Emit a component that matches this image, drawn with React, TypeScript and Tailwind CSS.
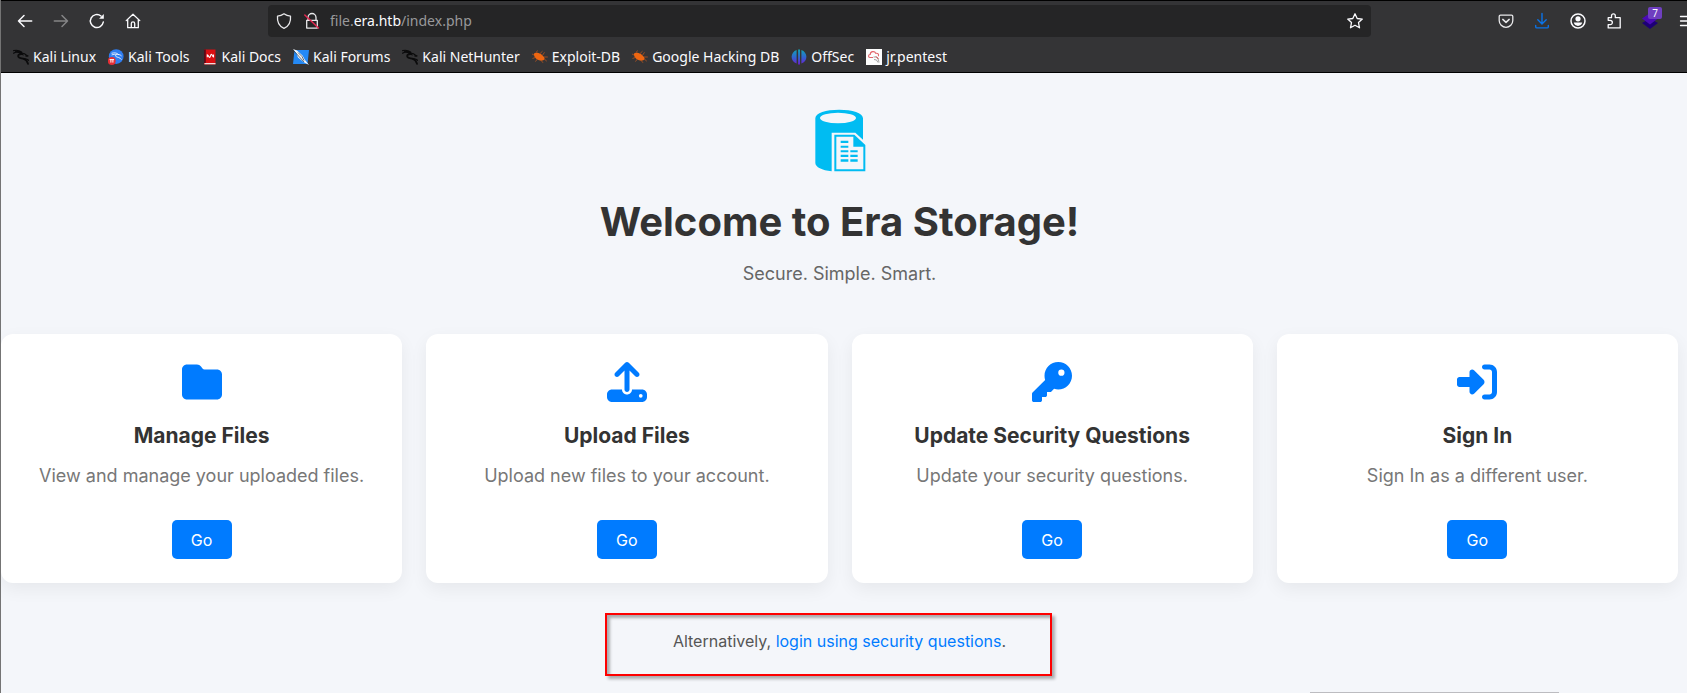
import type { ReactNode } from "react";
import { FaFolder, FaKey, FaRightToBracket, FaUpload } from "react-icons/fa6";

function NavButton({ label, children }: { label: string; children: ReactNode }) {
  return (
    <button aria-label={label} className="relative flex h-8 w-9 shrink-0 items-center justify-center text-[#fbfbfe]">
      {children}
    </button>
  );
}

function Line({ children, className = "" }: { children: ReactNode; className?: string }) {
  return (
    <svg
      viewBox="0 0 16 16"
      className={`size-4 shrink-0 overflow-visible ${className}`}
      fill="none"
      stroke="currentColor"
      strokeWidth="1.3"
      strokeLinecap="round"
      strokeLinejoin="round"
      aria-hidden="true"
    >
      {children}
    </svg>
  );
}

const kaliDragon = (
  <svg viewBox="0 0 16 16" className="size-4" fill="none" stroke="#0b0b0c" strokeLinecap="round" aria-hidden="true">
    <path d="M.6 1.6C3.500.9 6.500 1.500 8.600 3M.5 4.200C3 2.800 6 2.700 8.800 3.400" strokeWidth="1.200" />
    <path d="M3 2.400C6 3 8 4 9 5.200c-3-.4-4.300 1-3.600 2.600C6.200 9.600 9 9 11 9.800c2.200.9 3.300 2.600 4 5" strokeWidth="1.800" />
    <path d="M8.500 4.200c2.500.1 4 .7 5 2.100l1.800.9-2.300-.2M11 10c2-.3 3.400.2 4.500 1.300" strokeWidth="1.300" />
  </svg>
);

const kaliTools = (
  <svg viewBox="0 0 16 16" className="size-4" aria-hidden="true">
    <circle cx="8.200" cy="7.600" r="7.400" fill="#2f7df0" />
    <path d="M3.500 4.300c3-.9 5.500-.4 7 1.200-2.500-.2-3.600.7-2.700 1.900 1 1.100 3.800.4 5.700 3.300M3.600 6c2-.8 3.500-.8 5-.3M10 5.500c1.600 0 2.600.5 3.600 1.500" fill="none" stroke="#fff" strokeWidth=".8" />
    <circle cx="3.800" cy="12" r="3.900" fill="#e62e35" />
    <path d="M1.600 10.600h4.500M2.900 10.600v3M4.900 10.600v3" fill="none" stroke="#fff" strokeWidth="1" />
  </svg>
);

const kaliDocs = (
  <svg viewBox="0 0 16 16" className="size-4" aria-hidden="true">
    <path d="M2 .5h11.500v15H2z" fill="#d90f12" />
    <path d="M2 .5h1.800v13.500H2z" fill="#5b0b18" />
    <path d="M2.500 14h11v1.300h-11z" fill="#efdcdc" />
    <path d="M5.300 8.300V5.800c1 0 1.300 2.600 2.300 2.600s.8-3 1.800-3 1 2.600 2.100 2.600V5.600" fill="none" stroke="#fff" strokeWidth="1.100" />
  </svg>
);

const kaliForums = (
  <svg viewBox="0 0 16 16" className="size-4" aria-hidden="true">
    <path d="M1.500 1H16l-1.500 14H0z" fill="#2489f5" />
    <path d="M0 0l4 1.500 5.500 5L12 11l4 5-5.500-3L5 8.500 3.500 4.500z" fill="#f4f7fb" />
    <path d="M1 2l5 5.500L11 13M5 3.500l4 4 2 4" fill="none" stroke="#27313d" strokeWidth=".7" />
  </svg>
);

const exploitBug = (
  <svg viewBox="0 0 16 16" className="size-4" aria-hidden="true">
    <path d="M2 4.500C4 3.300 7 3.800 9.500 5.600c2 1.400 3.500 3.400 3 4.700-.8 1.700-4.800 1.800-7.300.3C3 9.200 1.500 6.500 2 4.500z" fill="#ee6611" />
    <path d="M4 3.800L5.500 1.500M8 4.600l2.500-2.400M10.500 6.300l2-3M12 8h3.800M12.300 10l2.500 2.200M9 11.300l2 2.500M5 10.300l-1.500 2.300M3.200 8.500L.5 9.500M2 6L0 5" fill="none" stroke="#b65420" strokeWidth=".8" />
  </svg>
);

const offSec = (
  <svg viewBox="0 0 16 16" className="size-4" aria-hidden="true">
    <defs>
      <linearGradient id="offsec" x1="0" y1="0" x2="0" y2="1">
        <stop offset="0" stopColor="#10a5b5" />
        <stop offset=".5" stopColor="#2f67cf" />
        <stop offset="1" stopColor="#6a1fd0" />
      </linearGradient>
    </defs>
    <path d="M5.600.9v13.700C2.600 13.500.6 10.900.6 7.800S2.600 2 5.600.9zM10.400.9c3 1.100 5 3.800 5 6.900s-2 5.700-5 6.800zM7.100.5h1.900v15H7.100z" fill="url(#offsec)" />
  </svg>
);

const pentestCloud = (
  <svg viewBox="0 0 16 16" className="size-4" aria-hidden="true">
    <path d="M0 0h16v16H0z" fill="#fdfdfd" />
    <path d="M7 8.500H4C2 8.300 2 5.600 4.200 5.500 4.300 2 8.800 1.800 9.700 4.300c2.200-.4 3.500 1.200 2.600 3" fill="none" stroke="#e2666c" strokeWidth="1.100" />
    <path d="M7.500 8h3.500l1.500 3 .5 2.500M8 10.500l2.500.5L12 13.500" fill="none" stroke="#999" strokeWidth=".9" />
    <path d="M10 7.500l2.500 2.500" stroke="#d33" strokeWidth=".9" />
  </svg>
);

const bookmarks = [
  { label: "Kali Linux", icon: kaliDragon },
  { label: "Kali Tools", icon: kaliTools },
  { label: "Kali Docs", icon: kaliDocs },
  { label: "Kali Forums", icon: kaliForums },
  { label: "Kali NetHunter", icon: kaliDragon },
  { label: "Exploit-DB", icon: exploitBug },
  { label: "Google Hacking DB", icon: exploitBug },
  { label: "OffSec", icon: offSec },
  { label: "jr.pentest", icon: pentestCloud },
];

const cards = [
  { title: "Manage Files", text: "View and manage your uploaded files.", Icon: FaFolder },
  { title: "Upload Files", text: "Upload new files to your account.", Icon: FaUpload },
  { title: "Update Security Questions", text: "Update your security questions.", Icon: FaKey },
  { title: "Sign In", text: "Sign In as a different user.", Icon: FaRightToBracket },
];

function BrowserChrome() {
  return (
    <header className="overflow-hidden border-y border-black bg-[#343436] font-['Noto_Sans',sans-serif] text-[#fbfbfe]">
      <div className="-mr-[17px] flex items-center py-1 pl-1.5">
        <NavButton label="Back">
          <Line><path d="M14.700 8H1.500M7 2.500L1.500 8 7 13.500" strokeWidth="1.500" /></Line>
        </NavButton>
        <NavButton label="Forward">
          <Line className="text-[#858587]"><path d="M1.300 8h13.200M9 2.500L14.500 8 9 13.500" strokeWidth="1.500" /></Line>
        </NavButton>
        <NavButton label="Reload">
          <Line>
            <path d="M14.300 9A6.500 6.500 0 1 1 12 3" strokeWidth="1.500" />
            <path d="M14.800 1v4.700h-4.700z" fill="currentColor" stroke="none" />
          </Line>
        </NavButton>
        <NavButton label="Home">
          <Line><path d="M1.200 7.600L8 1.200l6.800 6.400M2.700 6.500v8.200h10.600V6.500M6.300 14.500v-4a1.700 1.700 0 0 1 3.400 0v4" /></Line>
        </NavButton>
        <div className="mx-[117px] flex h-8 min-w-0 flex-1 items-center rounded bg-[#252526] px-2">
          <Line className="text-[#e8e8ea]">
            <path d="M8 .8C6.200 2.200 4 3 1.500 3.100c-.5 5.400 1.300 10 6.500 12.200 5.200-2.200 7-6.800 6.500-12.200C12 3 9.800 2.200 8 .8z" />
          </Line>
          <Line className="ml-3 text-[#e8e8ea]">
            <path d="M4 7V4.500a4 4 0 0 1 8 0V7M2.700 7.300h10.600v7.800H2.700z" />
            <path d="M.8 2l13.700 13" stroke="#e22850" strokeWidth="1.500" />
          </Line>
          <div className="ml-2.5 min-w-0 flex-1 truncate text-sm text-[#99999b]">
            file.<span className="text-[#fbfbfe]">era.htb</span>/index.php
          </div>
          <button aria-label="Bookmark this page">
            <Line><path d="M8 .8l2.200 4.700 5.100.6-3.800 3.500 1 5.200L8 12.300l-4.500 2.500 1-5.200L.7 6.100l5.100-.6z" /></Line>
          </button>
        </div>
        <NavButton label="Save to Pocket">
          <Line className="text-[#e8e8ea]">
            <path d="M2.500 2.200h11a1.300 1.300 0 0 1 1.300 1.300v4a6.800 6.800 0 0 1-13.600 0v-4a1.300 1.300 0 0 1 1.300-1.300z" />
            <path d="M4.800 6.400L8 9.400l3.200-3" strokeWidth="1.500" />
          </Line>
        </NavButton>
        <NavButton label="Downloads">
          <Line className="text-[#0a73e8]">
            <path d="M8 .5v10.300M3.800 6.800L8 11l4.200-4.200M1.700 12.500v1.200c0 .7.500 1.200 1.200 1.200h10.200c.7 0 1.200-.5 1.200-1.200v-1.200" strokeWidth="1.400" />
          </Line>
        </NavButton>
        <NavButton label="Account">
          <Line>
            <circle cx="8" cy="8" r="7" strokeWidth="1.500" />
            <circle cx="8" cy="5.800" r="2.600" fill="currentColor" stroke="none" />
            <path d="M3.800 9.600h8.400c-.4 2.200-2.200 3.300-4.200 3.300s-3.800-1.100-4.200-3.300z" fill="currentColor" stroke="none" />
          </Line>
        </NavButton>
        <NavButton label="Extensions">
          <Line>
            <path d="M2.200 7.300V4.700h3.300V2.700a1.900 1.900 0 0 1 3.800 0v2h4.900v10.200h-12v-3.300h2a2 2 0 0 0 0-4.300z" />
          </Line>
        </NavButton>
        <NavButton label="Layers">
          <svg viewBox="0 0 18 16" className="h-4 w-[18px] overflow-visible" aria-hidden="true">
            <path d="M9 5.500l8 4.500-8 6-8-6z" fill="#1d0076" />
            <path d="M9 0l8 5.500-8 6-8-6z" fill="#4b0bb5" />
          </svg>
          <span className="absolute top-0.5 left-4 flex h-3 w-3.5 items-center justify-center rounded-xs bg-[#6f3fc0] text-[10px]">
            7
          </span>
        </NavButton>
        <NavButton label="Menu">
          <Line><path d="M2.500 3.500h13M2.500 8h13M2.500 12.500h13" /></Line>
        </NavButton>
      </div>
      <nav aria-label="Bookmarks" className="flex h-[31px] items-center gap-3 pl-3">
        {bookmarks.map(({ label, icon }) => (
          <a key={label} href="#" className="flex items-center gap-1 text-sm whitespace-nowrap">
            {icon}
            {label}
          </a>
        ))}
      </nav>
    </header>
  );
}

function StorageLogo() {
  return (
    <svg viewBox="0 0 192 192" className="size-16" role="img" aria-label="Era Storage">
      <path
        fillRule="evenodd"
        fill="#00bcf2"
        d="M22 31C22 15 54 5 93.500 5S165 15 165 31V95L142 74H71V190C42 187 22 177 22 165zM36 30a54 16 0 1 0 108 0a54 16 0 1 0 -108 0z"
      />
      <path fillRule="evenodd" fill="#00bcf2" d="M79 80H139L172 111V190H79zM85 86V184H166V116H136V86z" />
      <path
        fill="#00bcf2"
        d="M98 98h23v7H98zM98 113h23v6H98zM98 127h23v6H98zM98 140h23v7H98zM98 154h23v7H98zM127 127h22v6h-22zM127 140h22v7h-22zM127 154h22v7h-22z"
      />
    </svg>
  );
}

export default function App() {
  return (
    <div className="relative min-h-screen overflow-x-hidden border-l border-[#747474] bg-[#f4f6fa] font-['Inter',sans-serif]">
      <BrowserChrome />
      <main className="mr-[9px] flex flex-col items-center pt-[35px] pb-9 text-center">
        <StorageLogo />
        <h1 className="mt-[26px] text-[40px] leading-12 font-bold text-[#333]">Welcome to Era Storage!</h1>
        <p className="mt-4 text-lg leading-6 text-[#666]">Secure. Simple. Smart.</p>
        <section className="mt-12 grid w-full grid-cols-4 gap-6">
          {cards.map(({ title, text, Icon }) => (
            <article
              key={title}
              className="flex flex-col items-center rounded-xl bg-white px-6 pt-7 pb-6 shadow-[0_6px_18px_rgba(0,0,0,0.06)]"
            >
              <Icon className="size-10 text-[#007bff]" aria-hidden="true" />
              <h2 className="mt-5 text-[21px] leading-7 font-bold text-[#333]">{title}</h2>
              <p className="mt-3.5 text-lg leading-6 text-[#777]">{text}</p>
              <button className="mt-8 h-[39px] w-[60px] rounded-[5px] bg-[#007bff] text-base text-white">Go</button>
            </article>
          ))}
        </section>
        <p className="relative mt-[46px] text-base leading-6 text-[#555]">
          Alternatively,{" "}
          <a href="#" className="text-[#007bff]">
            login using security questions
          </a>
          .
          <span className="pointer-events-none absolute -top-4 -right-[46px] -bottom-[23px] -left-[68px] border-2 border-[#fe0000] shadow-[3px_3px_3px_rgba(0,0,0,0.3),inset_3px_3px_3px_rgba(0,0,0,0.3)]" />
        </p>
      </main>
      <div className="absolute right-32 bottom-0 h-px w-[249px] bg-[#bcbcc0]" />
    </div>
  );
}
